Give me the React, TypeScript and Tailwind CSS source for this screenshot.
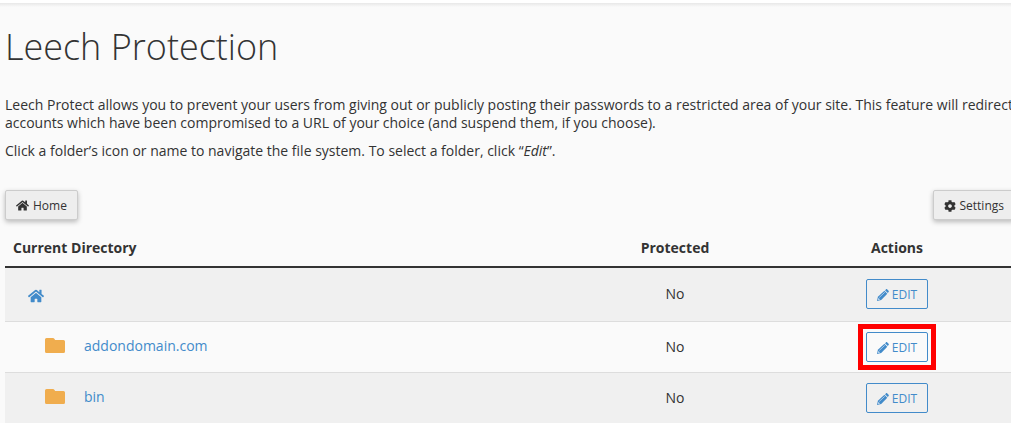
import { FaCog, FaHome } from "react-icons/fa";

const rows = [
  { name: "", selected: false },
  { name: "addondomain.com", selected: true },
  { name: "bin", selected: false },
];

function FolderIcon() {
  return (
    <svg viewBox="0 0 20 15" className="h-[15px] w-5 shrink-0 fill-[#f0ad4e]" aria-hidden="true">
      <path d="M1.500 0h6.500q.8 0 1.300.8l.9 1.200h8.300a1.500 1.500 0 0 1 1.500 1.500v10a1.500 1.500 0 0 1-1.500 1.500h-17a1.500 1.500 0 0 1-1.500-1.500v-12a1.500 1.500 0 0 1 1.500-1.500z" />
    </svg>
  );
}

function PencilIcon() {
  return (
    <svg viewBox="0 0 12 12" className="size-3 shrink-0" aria-hidden="true">
      <path d="M0 12l.9-4.200L7.400 1.800l2.900 2.900L4.200 11z" fill="#428bca" />
      <path d="M8 1.200l.9-.8c.4-.4 1-.4 1.400 0l1.300 1.300c.4.400.4 1 0 1.400l-.8.900z" fill="#428bca" />
      <path d="M2.200 8.500l5.600-5.200" stroke="#a9c9e8" strokeWidth="1" />
      <path d="M.9 10.900l.4-2 1.800 1.700z" fill="#d3e3f2" />
    </svg>
  );
}

export default function App() {
  return (
    <div className="min-h-screen overflow-hidden bg-[#fafafa] font-['Open_Sans',sans-serif] text-sm leading-[18px] text-[#333]">
      <div className="h-[3px] bg-white" />
      <div className="h-1 bg-linear-to-b from-[#e8e8e8] to-[#fafafa]" />

      <main className="-mr-1 pl-[5px]">
        <h1 className="pt-[18px] text-4xl leading-[44px] font-light">Leech Protection</h1>

        <p className="mt-[27px]">
          Leech Protect allows you to prevent your users from giving out or publicly posting their
          passwords to a restricted area of your site. This feature will redirect accounts which
          have been compromised to a URL of your choice (and suspend them, if you choose).
        </p>
        <p className="mt-2.5">
          Click a folder’s icon or name to navigate the file system. To select a folder, click “
          <em>Edit</em>”.
        </p>

        <div className="mt-[30px] flex justify-between">
          <button className="flex h-[30px] items-center gap-1 rounded-xs border border-[#ccc] bg-[#eee] px-2.5 pt-px text-xs shadow-[0_2px_5px_rgba(0,0,0,0.26)]">
            <FaHome className="size-[13px]" />
            Home
          </button>
          <button className="flex h-[30px] items-center gap-1 rounded-xs border border-[#ccc] bg-[#eee] px-2.5 pt-px text-xs shadow-[0_2px_5px_rgba(0,0,0,0.26)]">
            <FaCog className="size-3" />
            Settings
          </button>
        </div>

        <table className="mt-2.5 w-full table-fixed border-collapse">
          <thead>
            <tr className="h-[37px] border-b-2 border-[#333]">
              <th className="px-2 text-left font-bold">Current Directory</th>
              <th className="w-[208px] font-bold">Protected</th>
              <th className="w-[236px] font-bold">Actions</th>
            </tr>
          </thead>
          <tbody>
            {rows.map((row) => (
              <tr
                key={row.name}
                className="h-[51px] border-b border-[#ddd] odd:bg-[#f0f0f0] first:h-[54px]"
              >
                <td>
                  {row.name ? (
                    <a href="#" className="ml-10 flex items-center gap-[19px] pb-0.5 text-[#428bca]">
                      <FolderIcon />
                      {row.name}
                    </a>
                  ) : (
                    <a href="#" aria-label="Home" className="ml-[23px] flex pt-1 text-[#428bca]">
                      <FaHome className="size-4" />
                    </a>
                  )}
                </td>
                <td className="text-center">No</td>
                <td className="text-center">
                  <div className="relative inline-flex">
                    <button className="flex h-[30px] items-center gap-[3px] rounded-xs border border-[#428bca] px-2.5 pt-0.5 text-xs text-[#428bca]">
                      <PencilIcon />
                      EDIT
                    </button>
                    {row.selected && (
                      <div className="pointer-events-none absolute -inset-2 border-5 border-[#ff0000]" />
                    )}
                  </div>
                </td>
              </tr>
            ))}
          </tbody>
        </table>
      </main>
    </div>
  );
}
